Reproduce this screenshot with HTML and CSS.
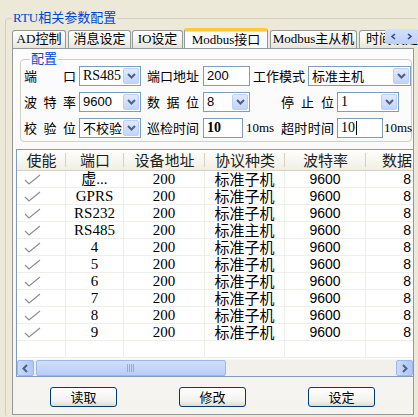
FILE: index.html
```html
<!DOCTYPE html>
<html>
<head>
<meta charset="utf-8">
<link rel="stylesheet" href="styles.css">
</head>
<body>
<fieldset class="outer">
  <legend class="outer-title">RTU相关参数配置</legend>
  <div class="tabs">
    <div class="tab w1">AD控制</div>
    <div class="tab w2">消息设定</div>
    <div class="tab w3">IO设定</div>
    <div class="tab w4 active">Modbus接口</div>
    <div class="tab w5">Modbus主从机</div>
    <div class="tab w6">时间设定</div>
    <div class="tab-scroll">
      <svg width="33" height="15" viewBox="0 0 33 15"><polyline points="10,5 7,7.5 10,10" fill="none" stroke="#2C4C9C" stroke-width="1.6"/><polyline points="23,5 26,7.5 23,10" fill="none" stroke="#2C4C9C" stroke-width="1.6"/></svg>
    </div>
  </div>
  <div class="panel">
    <fieldset class="cfg">
      <legend class="cfg-title">配置</legend>
      <div class="row">
        <span class="lbl l1">端 口</span>
        <div class="combo c1"><span class="val serif">RS485</span><span class="drop"><svg width="13" height="14" viewBox="0 0 13 14"><polyline points="3,5 6.5,8.5 10,5" fill="none" stroke="#4D6185" stroke-width="2"/></svg></span></div>
        <span class="lbl l2">端口地址</span>
        <div class="edit e1"><span class="val sans">200</span></div>
        <span class="lbl l3a">工作模式</span>
        <div class="combo c3a"><span class="val cjk">标准主机</span><span class="drop"><svg width="13" height="14" viewBox="0 0 13 14"><polyline points="3,5 6.5,8.5 10,5" fill="none" stroke="#4D6185" stroke-width="2"/></svg></span></div>
      </div>
      <div class="row">
        <span class="lbl l1">波 特 率</span>
        <div class="combo c1"><span class="val sans">9600</span><span class="drop"><svg width="13" height="14" viewBox="0 0 13 14"><polyline points="3,5 6.5,8.5 10,5" fill="none" stroke="#4D6185" stroke-width="2"/></svg></span></div>
        <span class="lbl l2">数 据 位</span>
        <div class="combo e1"><span class="val sans">8</span><span class="drop"><svg width="13" height="14" viewBox="0 0 13 14"><polyline points="3,5 6.5,8.5 10,5" fill="none" stroke="#4D6185" stroke-width="2"/></svg></span></div>
        <span class="lbl l3b">停 止 位</span>
        <div class="combo c3b"><span class="val serif">1</span><span class="drop"><svg width="13" height="14" viewBox="0 0 13 14"><polyline points="3,5 6.5,8.5 10,5" fill="none" stroke="#4D6185" stroke-width="2"/></svg></span></div>
      </div>
      <div class="row">
        <span class="lbl l1">校 验 位</span>
        <div class="combo c1"><span class="val cjk">不校验</span><span class="drop"><svg width="13" height="14" viewBox="0 0 13 14"><polyline points="3,5 6.5,8.5 10,5" fill="none" stroke="#4D6185" stroke-width="2"/></svg></span></div>
        <span class="lbl l2">巡检时间</span>
        <div class="edit e2"><span class="val serif bold">10</span></div>
        <span class="unit u1">10ms</span>
        <span class="lbl l3c">超时时间</span>
        <div class="edit e3"><span class="val serif">10</span><span class="caret"></span></div>
        <span class="unit u2">10ms</span>
      </div>
    </fieldset>

    <div class="list">
      <div class="lv-head">
        <div class="hc k1">使能</div>
        <div class="hc k2">端口</div>
        <div class="hc k3">设备地址</div>
        <div class="hc k4">协议种类</div>
        <div class="hc k5">波特率</div>
        <div class="hc k6"><span class="clip">数据位</span></div>
      </div>
      <div class="lv-body">
        <div class="lr"><div class="c k1"><svg class="chk" width="17" height="11" viewBox="0 0 17 11"><polyline points="1,6 5,10 16,1" fill="none" stroke="#8C8C8C" stroke-width="1.1"/></svg></div><div class="c k2">虚...</div><div class="c k3">200</div><div class="c k4">标准子机</div><div class="c k5">9600</div><div class="c k6">8</div></div>
        <div class="lr"><div class="c k1"><svg class="chk" width="17" height="11" viewBox="0 0 17 11"><polyline points="1,6 5,10 16,1" fill="none" stroke="#8C8C8C" stroke-width="1.1"/></svg></div><div class="c k2">GPRS</div><div class="c k3">200</div><div class="c k4">标准子机</div><div class="c k5">9600</div><div class="c k6">8</div></div>
        <div class="lr"><div class="c k1"><svg class="chk" width="17" height="11" viewBox="0 0 17 11"><polyline points="1,6 5,10 16,1" fill="none" stroke="#8C8C8C" stroke-width="1.1"/></svg></div><div class="c k2">RS232</div><div class="c k3">200</div><div class="c k4">标准子机</div><div class="c k5">9600</div><div class="c k6">8</div></div>
        <div class="lr"><div class="c k1"><svg class="chk" width="17" height="11" viewBox="0 0 17 11"><polyline points="1,6 5,10 16,1" fill="none" stroke="#8C8C8C" stroke-width="1.1"/></svg></div><div class="c k2">RS485</div><div class="c k3">200</div><div class="c k4">标准主机</div><div class="c k5">9600</div><div class="c k6">8</div></div>
        <div class="lr"><div class="c k1"><svg class="chk" width="17" height="11" viewBox="0 0 17 11"><polyline points="1,6 5,10 16,1" fill="none" stroke="#8C8C8C" stroke-width="1.1"/></svg></div><div class="c k2">4</div><div class="c k3">200</div><div class="c k4">标准子机</div><div class="c k5">9600</div><div class="c k6">8</div></div>
        <div class="lr"><div class="c k1"><svg class="chk" width="17" height="11" viewBox="0 0 17 11"><polyline points="1,6 5,10 16,1" fill="none" stroke="#8C8C8C" stroke-width="1.1"/></svg></div><div class="c k2">5</div><div class="c k3">200</div><div class="c k4">标准子机</div><div class="c k5">9600</div><div class="c k6">8</div></div>
        <div class="lr"><div class="c k1"><svg class="chk" width="17" height="11" viewBox="0 0 17 11"><polyline points="1,6 5,10 16,1" fill="none" stroke="#8C8C8C" stroke-width="1.1"/></svg></div><div class="c k2">6</div><div class="c k3">200</div><div class="c k4">标准子机</div><div class="c k5">9600</div><div class="c k6">8</div></div>
        <div class="lr"><div class="c k1"><svg class="chk" width="17" height="11" viewBox="0 0 17 11"><polyline points="1,6 5,10 16,1" fill="none" stroke="#8C8C8C" stroke-width="1.1"/></svg></div><div class="c k2">7</div><div class="c k3">200</div><div class="c k4">标准子机</div><div class="c k5">9600</div><div class="c k6">8</div></div>
        <div class="lr"><div class="c k1"><svg class="chk" width="17" height="11" viewBox="0 0 17 11"><polyline points="1,6 5,10 16,1" fill="none" stroke="#8C8C8C" stroke-width="1.1"/></svg></div><div class="c k2">8</div><div class="c k3">200</div><div class="c k4">标准子机</div><div class="c k5">9600</div><div class="c k6">8</div></div>
        <div class="lr"><div class="c k1"><svg class="chk" width="17" height="11" viewBox="0 0 17 11"><polyline points="1,6 5,10 16,1" fill="none" stroke="#8C8C8C" stroke-width="1.1"/></svg></div><div class="c k2">9</div><div class="c k3">200</div><div class="c k4">标准子机</div><div class="c k5">9600</div><div class="c k6">8</div></div>
        <div class="lr"><div class="c k1"></div><div class="c k2"></div><div class="c k3"></div><div class="c k4"></div><div class="c k5"></div><div class="c k6"></div></div>
      </div>
      <div class="hscroll">
        <div class="sbtn"><svg width="15" height="15" viewBox="0 0 15 15"><polyline points="9,4 5.5,7.5 9,11" fill="none" stroke="#4D6185" stroke-width="2"/></svg></div>
        <div class="thumb"><svg width="8" height="8" viewBox="0 0 8 8"><path d="M0.5 0v8M2.5 0v8M4.5 0v8M6.5 0v8" stroke="#8FA8E6" stroke-width="1"/></svg></div>
        <div class="track"></div>
        <div class="sbtn"><svg width="15" height="15" viewBox="0 0 15 15"><polyline points="6,4 9.5,7.5 6,11" fill="none" stroke="#4D6185" stroke-width="2"/></svg></div>
      </div>
    </div>

    <div class="buttons">
      <div class="btn">读取</div>
      <div class="btn">修改</div>
      <div class="btn">设定</div>
    </div>
  </div>
</fieldset>
</body>
</html>
```

FILE: styles.css
```css
html, body {
  margin: 0;
  padding: 0;
}
body {
  width: 418px;
  height: 417px;
  overflow: hidden;
  background: #ECE9D8;
  color: #000;
  font-family: "Liberation Serif", "Noto Sans CJK SC", serif;
  font-size: 13px;
}

.outer {
  margin: 10px 0 0 5px;
  padding: 0 0 0 6px;
  border: 1px solid #D0D0BF;
  border-radius: 4px;
  width: 413px;
  height: 407px;
  border-right-color: transparent;
  border-bottom-color: transparent;
  box-sizing: border-box;
  min-width: 0;
}
.outer-title {
  padding: 0 1px;
  margin-left: 0;
  line-height: 16px;
  font-size: 13px;
  color: #0046D5;
}

/* Tabs */
.tabs {
  position: relative;
  display: flex;
  align-items: flex-end;
  margin-top: 2px;
  height: 20px;
  width: 406px;
  overflow: hidden;
}
.tab {
  flex: none;
  box-sizing: border-box;
  height: 18px;
  line-height: 16px;
  border: 1px solid #919B9C;
  border-bottom: none;
  border-radius: 3px 3px 0 0;
  background: linear-gradient(#FFFFFF, #F3F2EC 60%, #E6E4DA);
  text-align: center;
  white-space: nowrap;
  overflow: hidden;
  margin-right: 2px;
  font-size: 13px;
}
.w1 { width: 54px; }
.w2 { width: 63px; margin-right: 1px; }
.w3 { width: 51px; margin-right: 1px; }
.w4 { width: 84px; }
.w5 { width: 87px; }
.w6 { width: 60px; text-align: left; padding-left: 6px; }
.tab.active {
  height: 21px;
  margin-bottom: -1px;
  position: relative;
  z-index: 2;
  border-top: 3px solid #FFC83C;
  box-shadow: inset 0 1px 0 #FFDF8E;
  background: #FCFCFE;
  line-height: 18px;
  border-radius: 3px 3px 0 0;
}
.tab-scroll {
  position: absolute;
  right: 0;
  top: 1px;
  width: 33px;
  height: 15px;
  background: linear-gradient(#D3E0FD, #BCCFF8);
  border-radius: 2px;
  z-index: 3;
}
.tab-scroll svg { display: block; }

/* Panel */
.panel {
  box-sizing: border-box;
  width: 402px;
  height: 367px;
  border: 1px solid #919B9C;
  background: linear-gradient(#FCFCFE, #F4F3EE);
  padding: 0 0 0 3px;
  overflow: hidden;
}

.cfg {
  margin: 3px 1px 0 4px;
  padding: 0 2px 3px 2px;
  border: 1px solid #D0D0BF;
  border-radius: 4px;
  min-width: 0;
}
.cfg-title {
  margin-left: 7px;
  padding: 0 1px;
  line-height: 14px;
  font-size: 13px;
  color: #0046D5;
}

.row {
  display: flex;
  align-items: center;
  height: 20px;
  margin-bottom: 6px;
}
.row:last-child { margin-bottom: 0; }

.lbl {
  flex: none;
  font-family: "Noto Sans CJK SC", sans-serif;
  font-size: 13px;
  line-height: 20px;
  white-space: nowrap;
  text-align: justify;
  text-align-last: justify;
}
.l1 { width: 52px; margin-left: 1px; }
.l2 { width: 52px; margin-left: 6px; }
.l3a { width: 52px; margin-left: 3px; }
.l3b { width: 53px; margin-left: 31px; }
.l3c { width: 53px; margin-left: 8px; }

.combo, .edit {
  flex: none;
  box-sizing: border-box;
  height: 20px;
  border: 1px solid #7F9DB9;
  background: #fff;
  display: flex;
  align-items: center;
  overflow: hidden;
}
.c1 { width: 62px; margin-left: 3px; }
.e1 { width: 47px; margin-left: 4px; }
.c3a { width: 103px; margin-left: 3px; }
.c3b { width: 62px; margin-left: 3px; }
.e2 { width: 40px; margin-left: 4px; }
.e3 { width: 46px; margin-left: 3px; }

.val {
  flex: 1;
  padding-left: 3px;
  white-space: nowrap;
  overflow: hidden;
  line-height: 18px;
}
.e3 .val { flex: none; }
.serif { font-family: "Liberation Serif", serif; font-size: 14px; }
.sans { font-family: "Liberation Sans", sans-serif; font-size: 13px; }
.cjk { font-family: "Noto Sans CJK SC", sans-serif; font-size: 13px; }
.bold { font-weight: bold; }
.caret {
  width: 1px;
  height: 14px;
  background: #000;
  margin-left: 1px;
}

.drop {
  flex: none;
  box-sizing: border-box;
  width: 16px;
  height: 16px;
  margin: 1px;
  border: 1px solid #BAD0FA;
  border-radius: 2px;
  background: linear-gradient(#E0EAFE, #C3D4FB);
}
.drop svg { display: block; margin: 0 auto; }

.unit {
  flex: none;
  font-family: "Liberation Serif", serif;
  font-size: 13px;
  line-height: 20px;
}
.u1 { margin-left: 3px; width: 27px; }
.u2 { margin-left: 1px; }

/* List view */
.list {
  box-sizing: border-box;
  width: 398px;
  height: 228px;
  margin-top: 7px;
  border: 1px solid #7F9DB9;
  background: #fff;
  display: flex;
  flex-direction: column;
  overflow: hidden;
}
.lv-head {
  display: flex;
  flex: none;
  height: 21px;
  background: linear-gradient(#FFFFFF, #F1EFE2);
  border-bottom: 1px solid #D6D2C2;
  box-sizing: border-box;
}
.hc {
  flex: none;
  box-sizing: border-box;
  font-family: "Noto Sans CJK SC", sans-serif;
  font-size: 15px;
  line-height: 20px;
  text-align: center;
  white-space: nowrap;
  position: relative;
  color: #222;
}
.hc::after {
  content: "";
  position: absolute;
  right: 0;
  top: 3px;
  bottom: 3px;
  width: 1px;
  background: #D6D2C2;
}
.k1 { width: 49px; }
.k2 { width: 58px; }
.k3 { width: 81px; }
.k4 { width: 80px; }
.k5 { width: 81px; }
.k6 { width: 47px; }
.hc.k6 { text-align: left; padding-left: 16px; }
.hc.k6::after { display: none; }
.clip {
  display: inline-block;
  width: 30px;
  overflow: hidden;
  vertical-align: top;
}

.lv-body {
  flex: 1;
  min-height: 0;
  overflow: hidden;
}
.lr {
  display: flex;
  height: 17px;
  box-sizing: border-box;
  border-bottom: 1px solid #EFEFEA;
}
.c {
  flex: none;
  box-sizing: border-box;
  border-right: 1px solid #EFEFEA;
  height: 16px;
  line-height: 16px;
  text-align: center;
  white-space: nowrap;
}
.c.k1 { text-align: left; padding-left: 7px; }
.chk { display: block; margin-top: 3px; }
.c.k2, .c.k3 { font-family: "Liberation Serif", "Noto Sans CJK SC", serif; font-size: 15px; }
.c.k4 { font-family: "Noto Sans CJK SC", sans-serif; font-size: 15px; line-height: 16px; }
.c.k5 { font-family: "Liberation Sans", sans-serif; font-size: 14px; }
.c.k6 { font-family: "Liberation Sans", sans-serif; font-size: 14px; text-align: right; padding-right: 2px; border-right: none; }

.hscroll {
  flex: none;
  display: flex;
  height: 17px;
  background: #F1F0EA;
  border-top: 1px solid #F7F7F4;
  box-sizing: border-box;
}
.sbtn {
  flex: none;
  box-sizing: border-box;
  width: 17px;
  height: 16px;
  border: 1px solid #9DB6EE;
  border-radius: 2px;
  background: linear-gradient(90deg, #CADAFD, #AFC6F8);
  display: flex;
  align-items: center;
  justify-content: center;
}
.thumb {
  flex: none;
  box-sizing: border-box;
  width: 190px;
  height: 16px;
  margin-left: 2px;
  border: 1px solid #9DB6EE;
  border-radius: 2px;
  background: linear-gradient(#D2DFFD, #B8CCFA);
  display: flex;
  align-items: center;
  justify-content: center;
}
.track { flex: 1; }

/* Buttons */
.buttons {
  display: flex;
  gap: 62px;
  padding-left: 34px;
  margin-top: 10px;
}
.btn {
  flex: none;
  box-sizing: border-box;
  width: 67px;
  height: 20px;
  border: 1px solid #003C74;
  border-radius: 3px;
  background: linear-gradient(#FFFFFF, #F3F2EE 70%, #DEDBD0);
  font-family: "Noto Sans CJK SC", sans-serif;
  font-size: 13px;
  line-height: 18px;
  text-align: center;
}
```
